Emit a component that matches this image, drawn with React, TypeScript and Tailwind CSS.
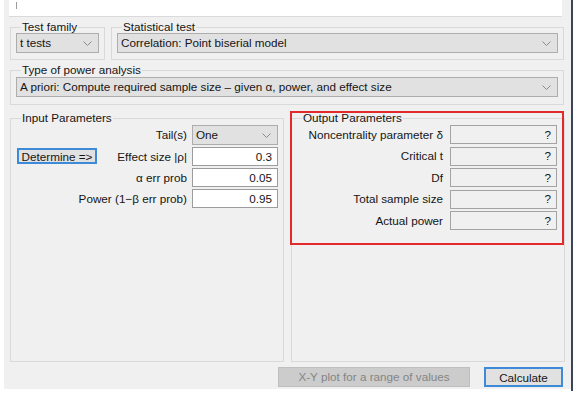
import React from "react";

function Chevron() {
  return (
    <svg width="9" height="5" viewBox="0 0 9 5" className="shrink-0">
      <path d="M0.5 0.5 L4.5 4.5 L8.5 0.5" fill="none" stroke="#8a8a8a" strokeWidth="1" />
    </svg>
  );
}

function Select({ value, className = "" }: { value: string; className?: string }) {
  return (
    <div
      className={`flex items-center justify-between h-[20px] bg-[#e1e1e1] border border-[#adadad] pl-[3px] pr-[6px] ${className}`}
    >
      <span className="truncate">{value}</span>
      <Chevron />
    </div>
  );
}

function Group({
  title,
  className = "",
  children,
}: {
  title: string;
  className?: string;
  children: React.ReactNode;
}) {
  return (
    <fieldset className={`min-w-0 border border-[#d9d9d9] px-[5px] ${className}`}>
      <legend className="ml-[5px] px-[1px] leading-[14px]">{title}</legend>
      {children}
    </fieldset>
  );
}

const inputs = [
  { label: "Effect size |ρ|", value: "0.3" },
  { label: "α err prob", value: "0.05" },
  { label: "Power (1−β err prob)", value: "0.95" },
];

const outputs = [
  "Noncentrality parameter δ",
  "Critical t",
  "Df",
  "Total sample size",
  "Actual power",
];

export default function App() {
  return (
    <div className="w-[580px] h-[399px] bg-white flex font-['Liberation_Sans',Arial,sans-serif] text-[11.7px] text-[#151515]">
      <div className="ml-[4px] w-[567px] h-[389px] bg-[#f0f0f0] flex flex-col relative">
        {/* top text area edge */}
        <div className="ml-[5px] w-[553px] h-[17px] bg-white border-b border-[#dadada] relative">
          <div className="absolute left-[7px] top-[2px] w-px h-[7px] bg-[#9a9a9a]" />
        </div>

        <div className="flex gap-[6px] ml-[6px] mt-[3px]">
          <Group title="Test family" className="w-[95px] pb-[6px]">
            <Select value="t tests" className="-mt-px" />
          </Group>
          <Group title="Statistical test" className="w-[453px] pb-[6px]">
            <Select value="Correlation: Point biserial model" className="-mt-px" />
          </Group>
        </div>

        <Group title="Type of power analysis" className="ml-[6px] w-[554px] mt-[3px] pb-[7px]">
          <Select value="A priori: Compute required sample size – given α, power, and effect size" />
        </Group>

        <div className="flex gap-[7px] ml-[6px] mt-[6px]">
          <Group title="Input Parameters" className="w-[274px] h-[251px]">
            <div className="flex flex-col gap-[2px]">
              <div className="flex items-center h-[20px]">
                <span className="w-[172px] text-right pr-[1px]">Tail(s)</span>
                <Select value="One" className="ml-[4px] w-[86px] h-[20px]" />
              </div>
              {inputs.map((r, i) => (
                <div key={r.label} className="flex items-center h-[19px]">
                  <div className="w-[172px] flex items-center justify-between pr-[1px]">
                    {i === 0 ? (
                      <button className="ml-[1px] h-[16px] w-[80px] flex items-center justify-center bg-[#e1e1e1] border-2 border-[#3d8ad9] leading-none">
                        Determine =&gt;
                      </button>
                    ) : (
                      <span />
                    )}
                    <span className="text-right">{r.label}</span>
                  </div>
                  <div className="ml-[4px] w-[86px] h-[19px] bg-white border border-[#9c9c9c] flex items-center justify-end pr-[5px]">
                    {r.value}
                  </div>
                </div>
              ))}
            </div>
          </Group>

          <Group title="Output Parameters" className="w-[274px] h-[251px]">
            <div className="flex flex-col gap-[2.5px]">
              {outputs.map((l) => (
                <div key={l} className="flex items-center h-[19px]">
                  <span className="w-[146px] text-right">{l}</span>
                  <div className="ml-[7px] w-[107px] h-[19px] bg-[#f0f0f0] border border-[#a3a3a3] flex items-center justify-end pr-[5px]">
                    ?
                  </div>
                </div>
              ))}
            </div>
          </Group>
        </div>

        <div className="flex justify-end gap-[14px] mt-[5px] mr-[8px]">
          <button className="w-[192px] h-[20px] bg-[#cccccc] border border-[#bfbfbf] text-[#858585]">
            X-Y plot for a range of values
          </button>
          <button className="w-[79px] h-[20px] bg-[#e1e1e1] border-2 border-[#3d8ad9]">
            Calculate
          </button>
        </div>

        {/* red annotation box */}
        <div className="absolute left-[286px] top-[111px] w-[274px] h-[134px] border-2 border-[#e32a2a] pointer-events-none" />
      </div>
      <div className="w-[2px] h-[391px] bg-[#3a4456]" />
    </div>
  );
}
